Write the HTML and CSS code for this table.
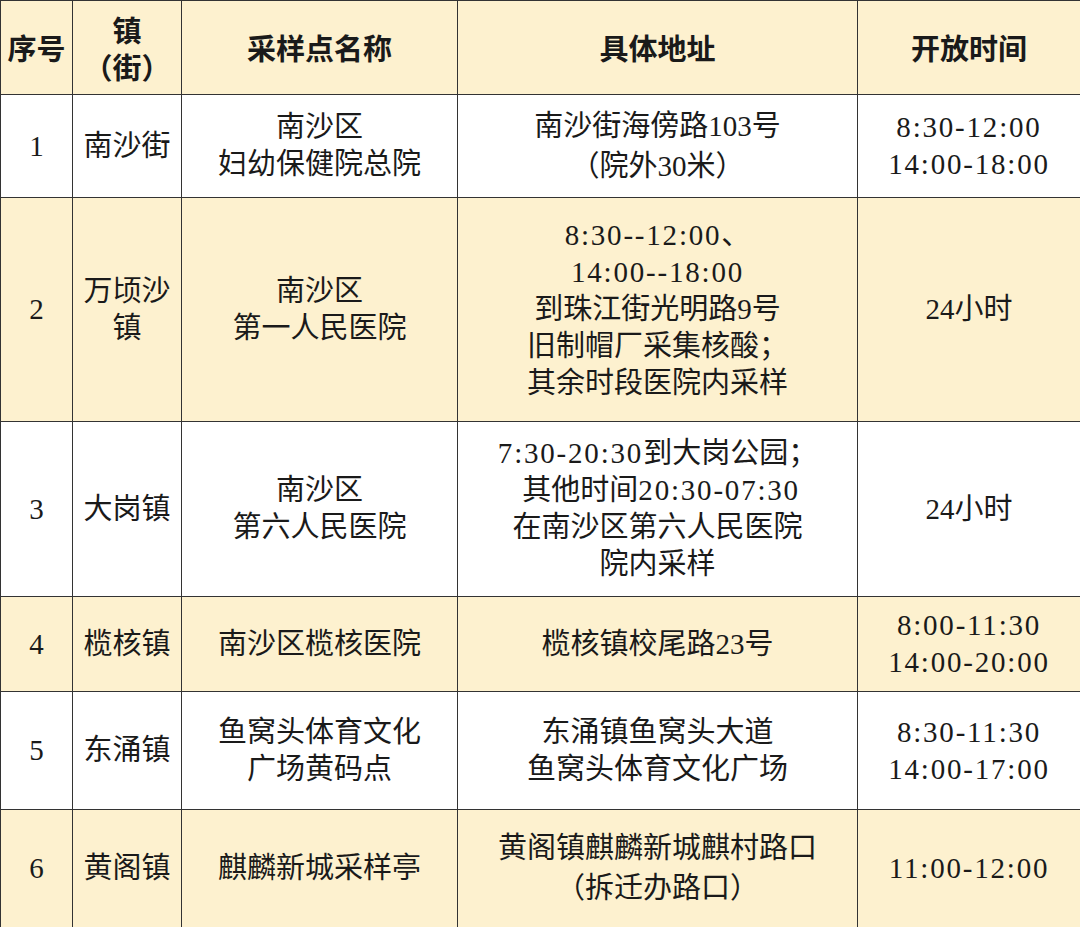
FILE: index.html
```html
<!DOCTYPE html>
<html lang="zh">
<head>
<meta charset="utf-8">
<link rel="stylesheet" href="styles.css">
</head>
<body>
<table class="sched">
<colgroup>
<col class="c1"><col class="c2"><col class="c3"><col class="c4"><col class="c5">
</colgroup>
<thead>
<tr class="head">
<th>序号</th>
<th>镇<br><span class="lp">（</span>街<span class="rp">）</span></th>
<th>采样点名称</th>
<th>具体地址</th>
<th>开放时间</th>
</tr>
</thead>
<tbody>
<tr class="r1">
<td>1</td>
<td>南沙街</td>
<td>南沙区<br>妇幼保健院总院</td>
<td>南沙街海傍路103号<br><span class="lp">（</span>院外30米<span class="rp">）</span></td>
<td class="time">8:30-12:00<br>14:00-18:00</td>
</tr>
<tr class="r2 alt">
<td>2</td>
<td>万顷沙<br>镇</td>
<td>南沙区<br>第一人民医院</td>
<td><span class="num">8:30--12:00</span>、<br><span class="num">14:00--18:00</span><br>到珠江街光明路9号<br>旧制帽厂采集核酸；<br>其余时段医院内采样</td>
<td>24小时</td>
</tr>
<tr class="r3">
<td>3</td>
<td>大岗镇</td>
<td>南沙区<br>第六人民医院</td>
<td><span class="num">7:30-20:30</span>到大岗公园；<br>&nbsp;其他时间<span class="num">20:30-07:30</span><br>在南沙区第六人民医院<br>院内采样</td>
<td>24小时</td>
</tr>
<tr class="r4 alt">
<td>4</td>
<td>榄核镇</td>
<td>南沙区榄核医院</td>
<td>榄核镇校尾路23号</td>
<td class="time">8:00-11:30<br>14:00-20:00</td>
</tr>
<tr class="r5">
<td>5</td>
<td>东涌镇</td>
<td>鱼窝头体育文化<br>广场黄码点</td>
<td>东涌镇鱼窝头大道<br>鱼窝头体育文化广场</td>
<td class="time">8:30-11:30<br>14:00-17:00</td>
</tr>
<tr class="r6 alt">
<td>6</td>
<td>黄阁镇</td>
<td>麒麟新城采样亭</td>
<td>黄阁镇麒麟新城麒村路口<br><span class="lp">（</span>拆迁办路口<span class="rp">）</span></td>
<td class="time">11:00-12:00</td>
</tr>
</tbody>
</table>
</body>
</html>
```
FILE: styles.css
```css
html, body {
  margin: 0;
  padding: 0;
  background: #ffffff;
}
.sched {
  width: 1080px;
  table-layout: fixed;
  border-collapse: collapse;
  font-family: "Liberation Serif", "Noto Sans CJK SC", serif;
  font-size: 29px;
  line-height: 37px;
  color: #1a1a1a;
}
.c1 { width: 72px; }
.c2 { width: 109px; }
.c3 { width: 276px; }
.c4 { width: 400px; }
.c5 { width: 223px; }
.sched th, .sched td {
  border: 1.5px solid #333333;
  text-align: center;
  vertical-align: middle;
  padding: 0;
}
.sched th {
  font-family: "Noto Sans CJK SC", sans-serif;
  font-weight: 700;
  font-size: 29px;
  background: #fdf1cf;
}
.alt td { background: #fdf1cf; }
.head { height: 94px; }
.r1 { height: 103px; }
.r2 { height: 224px; }
.r3 { height: 175px; }
.r4 { height: 95px; }
.r5 { height: 118px; }
.r6 { height: 118px; }
.time, .num {
  letter-spacing: 1.8px;
}
.lp, .rp {
  display: inline-block;
  width: 1em;
  font-family: "Noto Sans CJK SC", sans-serif;
}
.lp { text-align: right; }
.rp { text-align: left; }
```
